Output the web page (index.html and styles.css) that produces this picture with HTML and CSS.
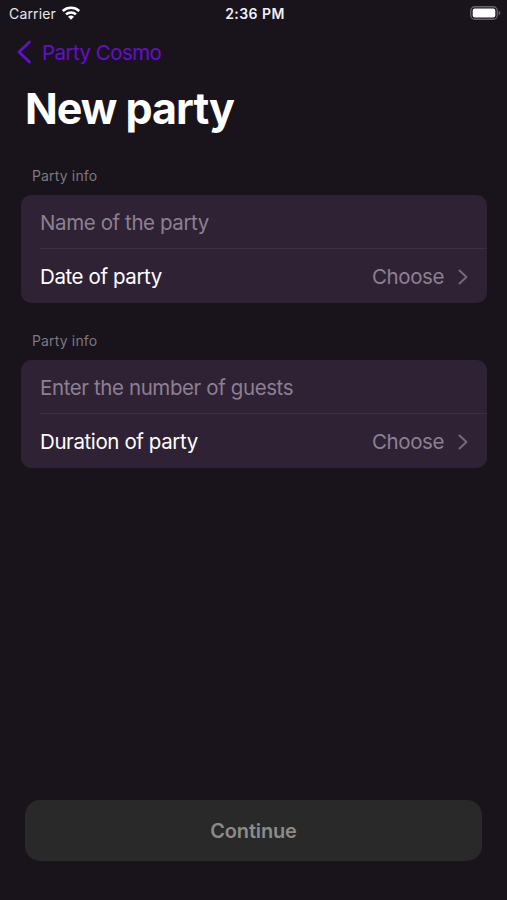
FILE: index.html
```html
<!DOCTYPE html>
<html lang="en">
<head>
<meta charset="utf-8">
<title>New party</title>
<link rel="stylesheet" href="styles.css">
</head>
<body>
<main class="screen">
  <header class="status">
    <div class="carrier"><span>Carrier</span>
      <svg class="wifi" viewBox="0 0 18 14"><path d="M.8 5C5.300.700 12.700.700 17.200 5M4 8.400C6.800 5.800 11.200 5.800 14 8.400" fill="none" stroke="#fff" stroke-width="2.600"/><path d="M9 13.700 6 10.700C7.700 9.200 10.300 9.200 12 10.700Z" fill="#fff"/></svg>
    </div>
    <span class="clock">2:36 PM</span>
    <svg class="battery" viewBox="0 0 31 14"><rect x=".75" y=".75" width="26.500" height="12.500" rx="4" fill="none" stroke="#68636b" stroke-width="1.300"/><rect x="2.700" y="2.500" width="22.600" height="9" rx="2" fill="#fff"/><path d="M28.700 4.700C30.700 5.500 30.700 8.500 28.700 9.300Z" fill="#68636b"/></svg>
  </header>
  <nav class="nav">
    <svg class="back" viewBox="0 0 16 26"><path d="M13.500 3 3 13 13.500 23" fill="none" stroke="currentColor" stroke-width="2.800" stroke-linecap="round" stroke-linejoin="round"/></svg>
    <span>Party Cosmo</span>
  </nav>
  <h1 class="title"><span>New party</span></h1>
  <section class="group">
    <h2 class="caption"><span>Party info</span></h2>
    <div class="card">
      <div class="row field"><span>Name of the party</span></div>
      <div class="row"><span>Date of party</span><span class="choose">Choose</span><svg class="chevron" viewBox="0 0 10 16"><path d="M1.500 1.500 8.500 8 1.500 14.500"/></svg></div>
    </div>
  </section>
  <section class="group">
    <h2 class="caption"><span>Party info</span></h2>
    <div class="card">
      <div class="row field"><span>Enter the number of guests</span></div>
      <div class="row"><span>Duration of party</span><span class="choose">Choose</span><svg class="chevron" viewBox="0 0 10 16"><path d="M1.500 1.500 8.500 8 1.500 14.500"/></svg></div>
    </div>
  </section>
  <button class="continue" type="button"><span>Continue</span></button>
</main>
</body>
</html>
```
FILE: styles.css
```css
* { box-sizing: border-box; }
body { margin: 0; background: #19131c; font-family: Inter, sans-serif; color: #fff; }
.screen { height: 900px; display: flex; flex-direction: column; padding-bottom: 39px; }
span { white-space: nowrap; }
.status { height: 28px; padding: 0 6px 2px 9px; display: grid; grid-template-columns: 1fr auto 1fr; align-items: center; }
.carrier { display: flex; align-items: center; gap: 6px; font-size: 14px; letter-spacing: .15px; color: #e9e7ea; }
.wifi { width: 18px; height: 14px; }
.clock { font-size: 14px; font-weight: 600; letter-spacing: .45px; color: #f2f0f3; }
.battery { width: 31px; height: 14px; justify-self: end; }
.nav { height: 48px; padding-left: 16px; display: flex; align-items: center; gap: 10px; color: #650fce; font-size: 20.5px; letter-spacing: -.55px; }
.nav span { padding-top: 1px; }
.back { width: 16px; height: 26px; }
.title { margin: 0; height: 64px; padding-left: 25px; display: flex; align-items: center; font-size: 43px; font-weight: 700; letter-spacing: -1px; }
.group { margin: 25px 20px 0 21px; }
.group + .group { margin-top: 27px; }
.caption { margin: 0; height: 30px; padding: 0 0 9px 11px; display: flex; align-items: center; font-size: 14px; font-weight: 400; letter-spacing: .15px; color: #7d7881; }
.card { height: 108px; border-radius: 10px; background: #2f2234; overflow: hidden; }
.row { height: 54px; margin-left: 19px; padding: 1px 19px 0 0; display: flex; align-items: center; font-size: 20.5px; letter-spacing: -.4px; }
.field { color: #8c8092; border-bottom: 1px solid #3c3041; }
.choose { margin-left: auto; margin-right: 14px; color: #8c8092; }
.chevron { width: 10px; height: 16px; fill: none; stroke: #75697b; stroke-width: 2; stroke-linecap: round; stroke-linejoin: round; }
.continue { margin: auto 25px 0; height: 61px; border: 0; border-radius: 15px; background: #292929; color: #8b8b8b; font: 600 20px Inter, sans-serif; letter-spacing: -.15px; }
```
